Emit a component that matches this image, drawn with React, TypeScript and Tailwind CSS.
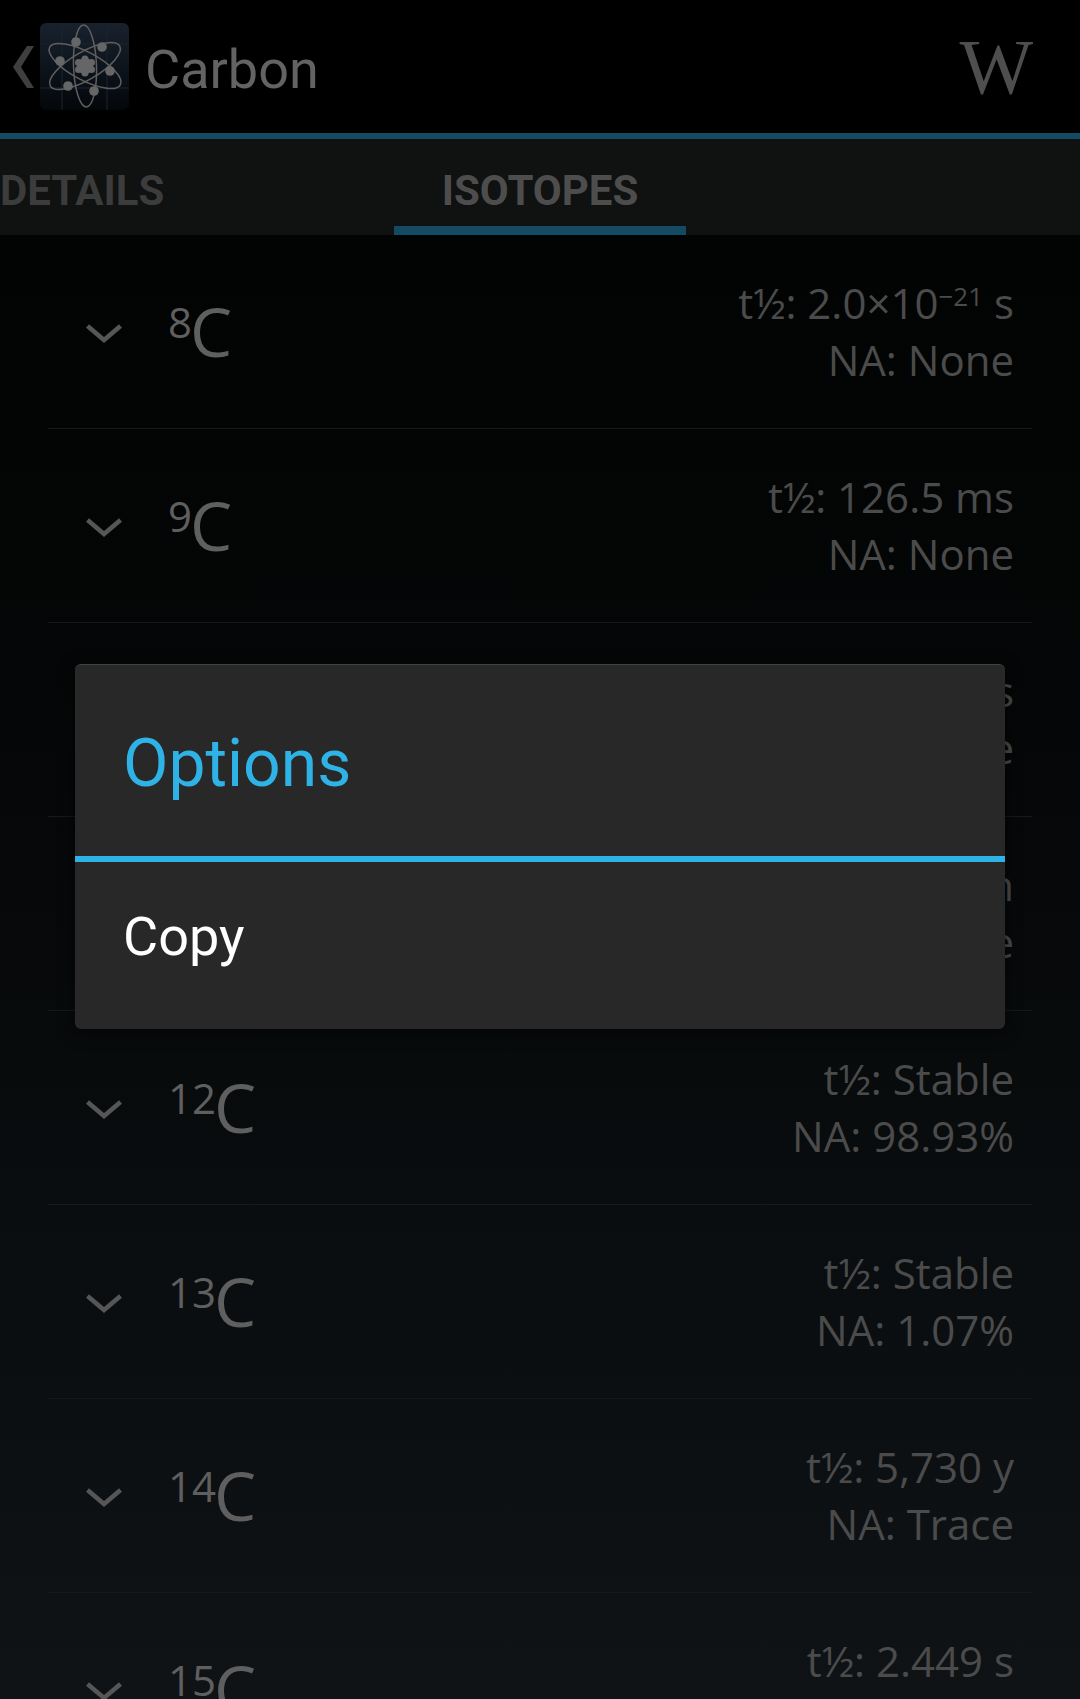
const isotopes = [
  { mass: '8', halfLife: 't½: 2.0×10', exponent: '−21', unit: ' s', abundance: 'NA: None' },
  { mass: '9', halfLife: 't½: 126.5 ms', abundance: 'NA: None' },
  { mass: '10', halfLife: 't½: 19.29 s', abundance: 'NA: None' },
  { mass: '11', halfLife: 't½: 20.334 min', abundance: 'NA: None' },
  { mass: '12', halfLife: 't½: Stable', abundance: 'NA: 98.93%' },
  { mass: '13', halfLife: 't½: Stable', abundance: 'NA: 1.07%' },
  { mass: '14', halfLife: 't½: 5,730 y', abundance: 'NA: Trace' },
  { mass: '15', halfLife: 't½: 2.449 s', abundance: 'NA: None' },
]

function AtomLogo() {
  return (
    <svg width="89" height="87" viewBox="0 0 89 87" className="shrink-0">
      <defs>
        <linearGradient id="tile" x1="0" y1="0" x2="0" y2="1">
          <stop offset="0" stopColor="#18222d" />
          <stop offset="0.6" stopColor="#0b1119" />
          <stop offset="1" stopColor="#04070a" />
        </linearGradient>
      </defs>
      <rect width="89" height="87" rx="6" fill="url(#tile)" />
      <g stroke="#1b242e" strokeWidth="1">
        <path d="M22 0V87M67 0V87M0 21H89M0 65H89" />
      </g>
      <g fill="none" stroke="#5f5f5f" strokeWidth="1.5">
        <ellipse cx="45" cy="43" rx="11.5" ry="41" transform="rotate(-2 45 43)" />
        <ellipse cx="45" cy="43" rx="14" ry="40" transform="rotate(-62 45 43)" />
        <ellipse cx="45" cy="43" rx="14" ry="40" transform="rotate(60 45 43)" />
      </g>
      <g fill="#666666">
        <circle cx="45" cy="43" r="8" />
        <circle cx="45" cy="36" r="3.5" />
        <circle cx="45" cy="50" r="3.5" />
        <circle cx="38.5" cy="39.5" r="3.5" />
        <circle cx="51.5" cy="39.5" r="3.5" />
        <circle cx="38.5" cy="46.5" r="3.5" />
        <circle cx="51.5" cy="46.5" r="3.5" />
        <circle cx="36" cy="19" r="4.8" />
        <circle cx="62" cy="24" r="4.8" />
        <circle cx="20" cy="38" r="4.8" />
        <circle cx="70" cy="48" r="4.8" />
        <circle cx="28" cy="63" r="4.8" />
        <circle cx="54" cy="68" r="4.8" />
      </g>
    </svg>
  )
}

type Isotope = { mass: string; halfLife: string; exponent?: string; unit?: string; abundance: string }

function IsotopeRow({ mass, halfLife, exponent, unit, abundance }: Isotope) {
  return (
    <div className="flex h-[194px] shrink-0 items-center border-b border-[#16181a] pl-[38px] pr-[18px]">
      <svg width="36" height="20" viewBox="0 0 36 20" className="mt-[4px] shrink-0">
        <path d="M1.5 2L18 16L34.5 2" fill="none" stroke="#565656" strokeWidth="4.5" />
      </svg>
      <div className="ml-[46px] flex items-start font-['Open_Sans',sans-serif] text-[#5f5f5f]">
        <span className="mt-[7px] text-[42px] font-medium leading-[57px]">{mass}</span>
        <span className="ml-[-2px] mt-[-1px] text-[67px] leading-[93px]">C</span>
      </div>
      <div className="ml-auto mt-[-2px] text-right font-['Open_Sans',sans-serif] text-[42px] leading-[57px] text-[#4b4b4b]">
        <div>
          {halfLife}
          {exponent && <span className="align-[13px] text-[26px] font-medium leading-none">{exponent}</span>}
          {unit}
        </div>
        <div>{abundance}</div>
      </div>
    </div>
  )
}

export default function App() {
  return (
    <div className="relative h-[1699px] w-[1080px] overflow-hidden bg-black">
      {/* Action bar */}
      <header className="flex h-[133px] items-center bg-black pl-[13px] pr-[47px]">
        <svg width="21" height="42" viewBox="0 0 21 42" className="shrink-0">
          <path d="M14 0H21L8 21L21 42H14L0 21Z" fill="#3f3f3f" />
        </svg>
        <div className="ml-[6px]">
          <AtomLogo />
        </div>
        <span className="ml-[16px] mt-[6px] font-['Roboto',sans-serif] text-[54px] leading-none text-[#636363]">Carbon</span>
        <span className="ml-auto font-['Liberation_Serif',serif] text-[78px] leading-none text-[#4e4e4e]">W</span>
      </header>
      <div className="h-[6px] bg-[#144a62]" />

      {/* Tabs */}
      <nav className="flex h-[96px] items-stretch bg-[#101111] font-['Roboto',sans-serif] text-[42px] font-bold text-[#3c3c3c]">
        <div className="flex w-[394px] items-center pt-[7px]">DETAILS</div>
        <div className="flex w-[292px] items-center justify-center border-b-[9px] border-[#144a62] pt-[15px] text-[#4d4d4d]">
          ISOTOPES
        </div>
      </nav>

      {/* Isotope list */}
      <main className="h-[1464px] bg-linear-to-b from-[#020303] to-[#101316] px-[48px]">
        {isotopes.map((iso) => (
          <IsotopeRow key={iso.mass} {...iso} />
        ))}
      </main>

      {/* Options dialog */}
      <div className="absolute left-[75px] top-[664px] w-[930px] overflow-hidden rounded-[6px] border-t border-[#424242] bg-[#282828] shadow-[0_4px_16px_rgba(0,0,0,0.6)]">
        <div className="flex h-[191px] items-center pl-[48px] pt-[6px] font-['Roboto',sans-serif] text-[66px] text-[#2fb3e6]">
          Options
        </div>
        <div className="h-[6px] bg-[#2fb3e6]" />
        <div className="flex h-[167px] items-center pb-[18px] pl-[48px] font-['Roboto',sans-serif] text-[54px] text-white">
          Copy
        </div>
      </div>
    </div>
  )
}
